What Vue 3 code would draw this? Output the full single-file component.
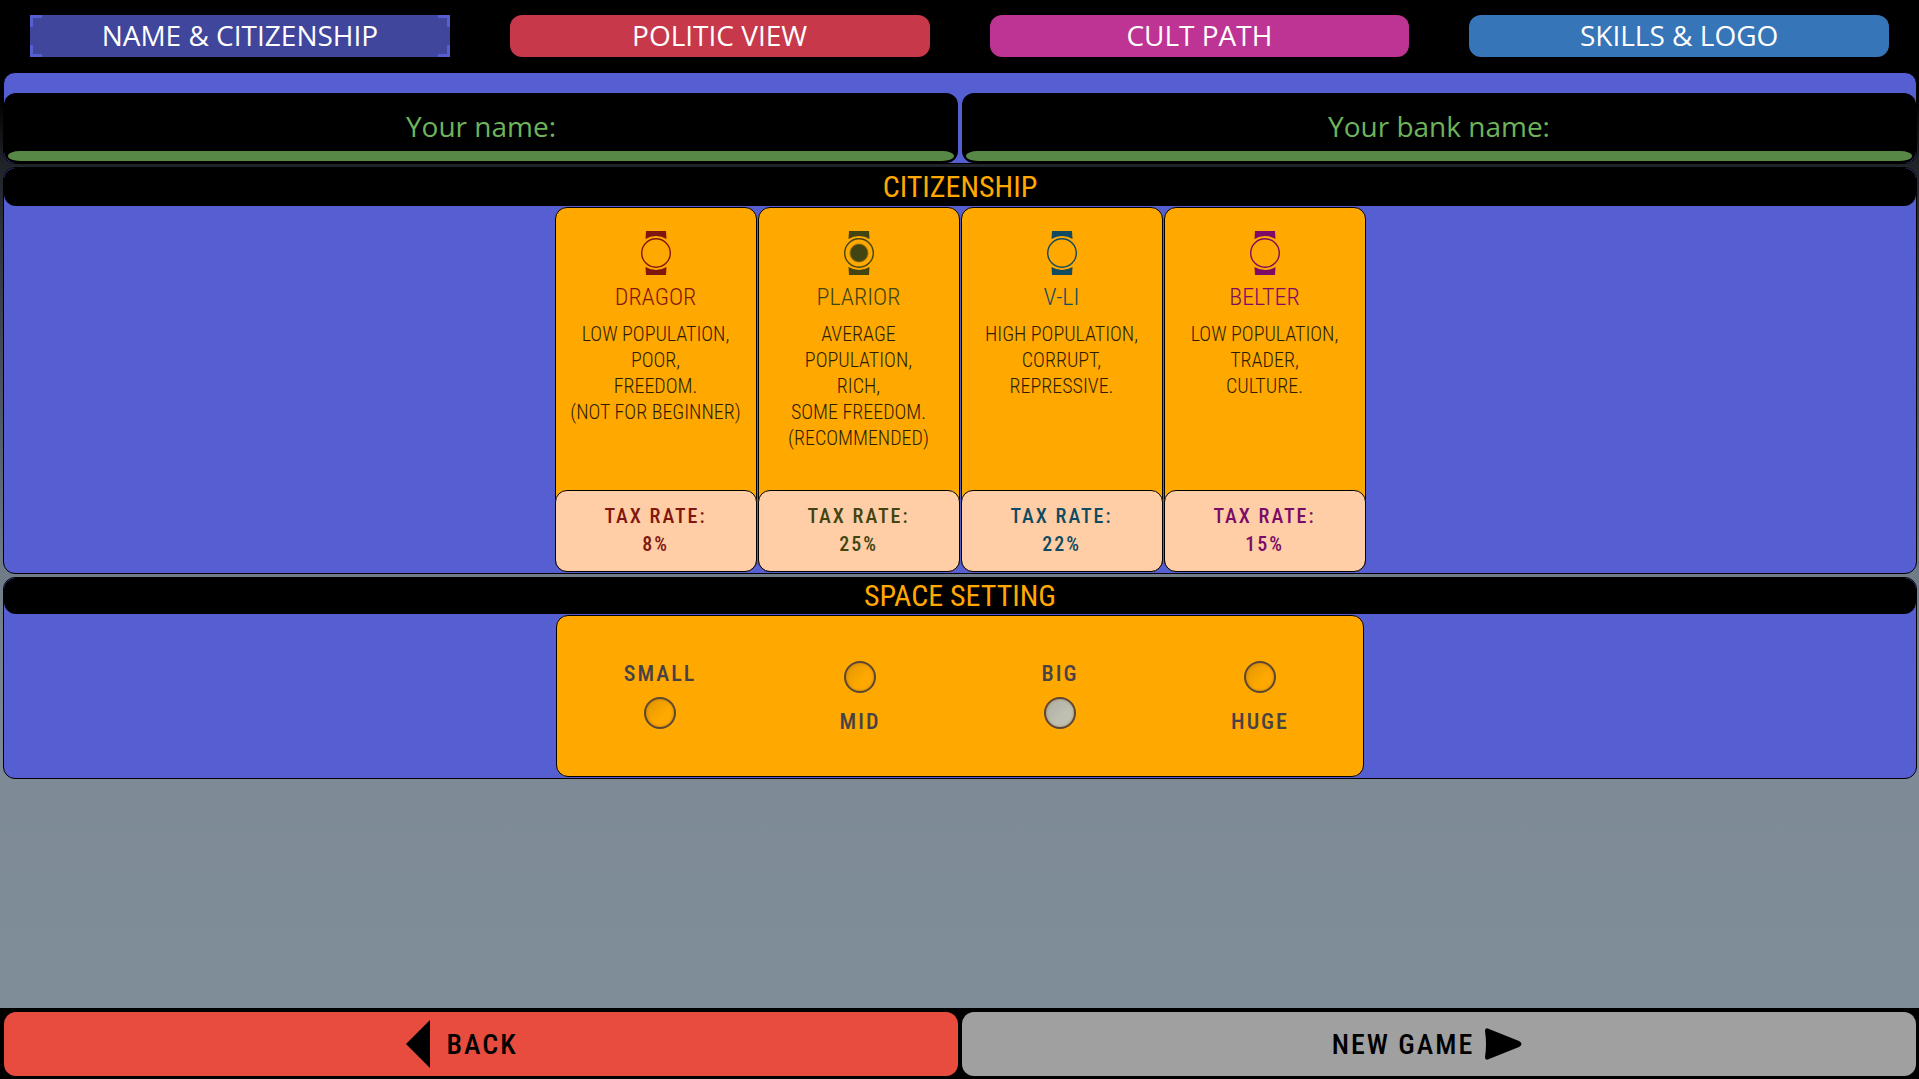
<script setup>
import { ref } from 'vue';

const tabs = [
	{ id: 'name', label: 'NAME & CITIZENSHIP' },
	{ id: 'politic', label: 'POLITIC VIEW' },
	{ id: 'cult', label: 'CULT PATH' },
	{ id: 'skills', label: 'SKILLS & LOGO' },
];

const citizenships = [
	{
		id: 'dragor',
		name: 'DRAGOR',
		lines: ['LOW POPULATION,', 'POOR,', 'FREEDOM.', '(NOT FOR BEGINNER)'],
		tax: 8
	},
	{
		id: 'plarior',
		name: 'PLARIOR',
		lines: ['AVERAGE', 'POPULATION,', 'RICH,', 'SOME FREEDOM.', '(RECOMMENDED)'],
		tax: 25
	},
	{
		id: 'vli',
		name: 'V-LI',
		lines: ['HIGH POPULATION,', 'CORRUPT,', 'REPRESSIVE.'],
		tax: 22
	},
	{
		id: 'belter',
		name: 'BELTER',
		lines: ['LOW POPULATION,', 'TRADER,', 'CULTURE.'],
		tax: 15
	},
];

const sizes = [
	{ id: 'small', label: 'SMALL' },
	{ id: 'mid', label: 'MID' },
	{ id: 'big', label: 'BIG' },
	{ id: 'huge', label: 'HUGE' },
];

const activeTab = ref('name');
const playerName = ref('');
const bankName = ref('');
const citizenship = ref('plarior');
const spaceSize = ref('big');
</script>

<template>
	<div class="page">
		<nav class="tabs">
			<button
				v-for="tab in tabs"
				:key="tab.id"
				type="button"
				:class="['tab', tab.id, { active: activeTab === tab.id }]"
				@click="activeTab = tab.id"
			>{{ tab.label }}</button>
		</nav>

		<main class="content">
			<section class="panel names">
				<div class="name-box">
					<label for="player-name">Your name:</label>
					<input id="player-name" v-model="playerName" type="text" />
				</div>
				<div class="name-box">
					<label for="bank-name">Your bank name:</label>
					<input id="bank-name" v-model="bankName" type="text" />
				</div>
			</section>

			<section class="panel">
				<h2 class="title first">CITIZENSHIP</h2>
				<div class="cards">
					<label v-for="item in citizenships" :key="item.id" :class="['card', item.id]">
						<span class="watch">
							<svg viewBox="0 0 30 44" width="30" height="44" aria-hidden="true">
								<path d="M5 0H25L25.5 8A20 20 0 0 0 4.5 8ZM4.5 36A20 20 0 0 0 25.5 36L25 44H5Z" fill="currentColor" />
								<circle cx="15" cy="22" r="14.3" fill="none" stroke="currentColor" stroke-width="1.4" />
							</svg>
							<input v-model="citizenship" type="radio" name="citizenship" :value="item.id" />
						</span>
						<span class="card-name">{{ item.name }}</span>
						<span class="card-text">
							<span v-for="line in item.lines" :key="line">{{ line }}</span>
						</span>
						<span class="tax">
							<span>TAX RATE:</span>
							<span>{{ item.tax }}%</span>
						</span>
					</label>
				</div>
			</section>

			<section class="panel">
				<h2 class="title">SPACE SETTING</h2>
				<div class="sizes">
					<label v-for="size in sizes" :key="size.id" class="size">
						<span>{{ size.label }}</span>
						<input v-model="spaceSize" type="radio" name="space-size" :value="size.id" />
					</label>
				</div>
			</section>
		</main>

		<footer class="footer">
			<button type="button" class="action back">
				<svg viewBox="0 0 24 48" width="24" height="48" aria-hidden="true">
					<path d="M24 0V48L0 24Z" />
				</svg>
				<span>BACK</span>
			</button>
			<button type="button" class="action next">
				<span>NEW GAME</span>
				<svg viewBox="0 0 38 32" width="38" height="32" aria-hidden="true">
					<path d="M1 3Q1 -1 5 1L35 13Q40 16 35 19L5 31Q1 33 1 29Q3 16 1 3Z" />
				</svg>
			</button>
		</footer>
	</div>
</template>

<style>
body {
	margin: 0;
	background: #808e9a;
}
</style>

<style scoped>
.page {
	min-height: 100vh;
	display: flex;
	flex-direction: column;
	box-sizing: border-box;
	background: linear-gradient(#000 0, #000 100px, #202429 165px, #707d88 575px, #7e8b97 780px, #808e9a 100%);
	font-family: 'Liberation Sans Narrow', 'Roboto Condensed', Roboto, sans-serif;
}

button {
	border: none;
	cursor: pointer;
	font-family: inherit;
}

input {
	appearance: none;
	margin: 0;
	box-sizing: border-box;
}

.tabs {
	display: grid;
	grid-template-columns: repeat(4, 1fr);
	padding: 15px 0;
	background: #000;
}

.tab {
	height: 42px;
	margin: 0 30px;
	padding: 0 0 2px;
	border-radius: 12px;
	color: #fff;
	font-family: 'Open Sans', sans-serif;
	font-size: 28px;
	line-height: 40px;
}

.name {
	background: #555fd2;
}

.politic {
	background: #c7384b;
}

.cult {
	background: #be3494;
}

.skills {
	background: #3675b8;
}

/* brackets in the four corners of the open tab */
.tab.active {
	border-radius: 0;
	background:
		linear-gradient(#555fd2, #555fd2) 0 0 / 12px 3px,
		linear-gradient(#555fd2, #555fd2) 0 0 / 3px 12px,
		linear-gradient(#555fd2, #555fd2) 100% 0 / 12px 3px,
		linear-gradient(#555fd2, #555fd2) 100% 0 / 3px 12px,
		linear-gradient(#555fd2, #555fd2) 0 100% / 12px 3px,
		linear-gradient(#555fd2, #555fd2) 0 100% / 3px 12px,
		linear-gradient(#555fd2, #555fd2) 100% 100% / 12px 3px,
		linear-gradient(#555fd2, #555fd2) 100% 100% / 3px 12px,
		#40469c;
	background-repeat: no-repeat;
}

.content {
	display: flex;
	flex-direction: column;
	gap: 3px;
	padding: 0 2px 0 3px;
}

.panel {
	border: 1px solid #000;
	border-radius: 12px;
	background: #555fd2;
}

.names {
	display: grid;
	grid-template-columns: 1fr 1fr;
	gap: 4px;
	padding-top: 20px;
}

.name-box {
	display: flex;
	flex-direction: column;
	padding: 11px 4px 2px;
	border-radius: 12px;
	background: #000;
	text-align: center;
}

.name-box label {
	margin-bottom: 2px;
	color: #6fb35b;
	font-family: 'Open Sans', sans-serif;
	font-size: 28px;
	line-height: 45px;
}

.name-box input {
	width: 100%;
	height: 10px;
	padding: 0 12px;
	border: none;
	border-radius: 12px / 5px;
	background: #578845;
	font-size: 8px;
}

.title {
	margin: 0;
	border-radius: 12px;
	background: #000;
	color: #ffa800;
	font-size: 30px;
	font-weight: 400;
	line-height: 36px;
	text-align: center;
}

.title.first {
	line-height: 38px;
}

.cards {
	display: flex;
	justify-content: center;
	gap: 1px;
	padding: 1px 0;
}

.card {
	display: flex;
	flex-direction: column;
	align-items: center;
	box-sizing: border-box;
	width: 202px;
	min-height: 365px;
	padding-top: 23px;
	border: 1px solid #000;
	border-radius: 12px;
	background: #ffa800;
	cursor: pointer;
}

.dragor {
	color: #80170f;
}

.plarior {
	color: #424411;
}

.vli {
	color: #0f4b63;
}

.belter {
	color: #7b0b66;
}

.watch {
	display: grid;
	place-items: center;
}

.watch svg,
.watch input {
	grid-area: 1 / 1;
}

.watch input {
	width: 20px;
	height: 20px;
	border-radius: 50%;
	color: inherit;
}

.watch input:checked {
	background: radial-gradient(circle, currentColor 8px, #ffa800 10px);
}

.card-name {
	margin-top: 6px;
	font-size: 24px;
	font-weight: 300;
	line-height: 32px;
}

.card-text {
	display: flex;
	flex-direction: column;
	margin-top: 8px;
	color: #2c1d00;
	font-size: 20px;
	font-weight: 300;
	line-height: 26px;
	text-align: center;
	white-space: nowrap;
}

.tax {
	display: flex;
	flex-direction: column;
	align-self: stretch;
	box-sizing: border-box;
	height: 82px;
	margin: auto -1px -1px;
	padding-top: 11px;
	border: 1px solid #000;
	border-radius: 12px;
	background: #ffcea6;
	font-size: 20px;
	font-weight: 500;
	line-height: 28px;
	letter-spacing: 2px;
	text-align: center;
}

.sizes {
	display: grid;
	grid-template-columns: repeat(4, 200px);
	justify-content: center;
	box-sizing: border-box;
	width: 808px;
	height: 162px;
	margin: 1px auto;
	border: 1px solid #000;
	border-radius: 12px;
	background: #ffa800;
}

.size {
	display: flex;
	flex-direction: column;
	align-items: center;
	gap: 10px;
	padding-top: 45px;
	color: #474247;
	font-size: 22px;
	font-weight: 500;
	line-height: 26px;
	letter-spacing: 2px;
	cursor: pointer;
}

.size:nth-child(even) {
	flex-direction: column-reverse;
	justify-content: flex-end;
	gap: 16px;
}

.size input {
	width: 32px;
	height: 32px;
	border: 2px solid #5d4634;
	border-radius: 50%;
	background: linear-gradient(135deg, #e09602, #ffa800 60%);
	box-shadow: inset 0 0 3px #b87a08;
}

.size input:checked {
	background: linear-gradient(135deg, #acada3, #bfc0b2 60%);
	box-shadow: inset 0 0 3px #a88a5a;
}

.footer {
	display: grid;
	grid-template-columns: 1fr 1fr;
	gap: 4px;
	margin-top: auto;
	padding: 4px 3px 3px 4px;
	background: #000;
}

.action {
	display: flex;
	align-items: center;
	justify-content: center;
	height: 64px;
	border-radius: 12px;
	color: #000;
	font-size: 28px;
	font-weight: 500;
	letter-spacing: 2px;
}

.back {
	gap: 16px;
	padding: 0 38px 0 0;
	background: #e74c3e;
}

.next {
	gap: 10px;
	padding: 0 24px 0 0;
	background: #a0a0a0;
}
</style>
